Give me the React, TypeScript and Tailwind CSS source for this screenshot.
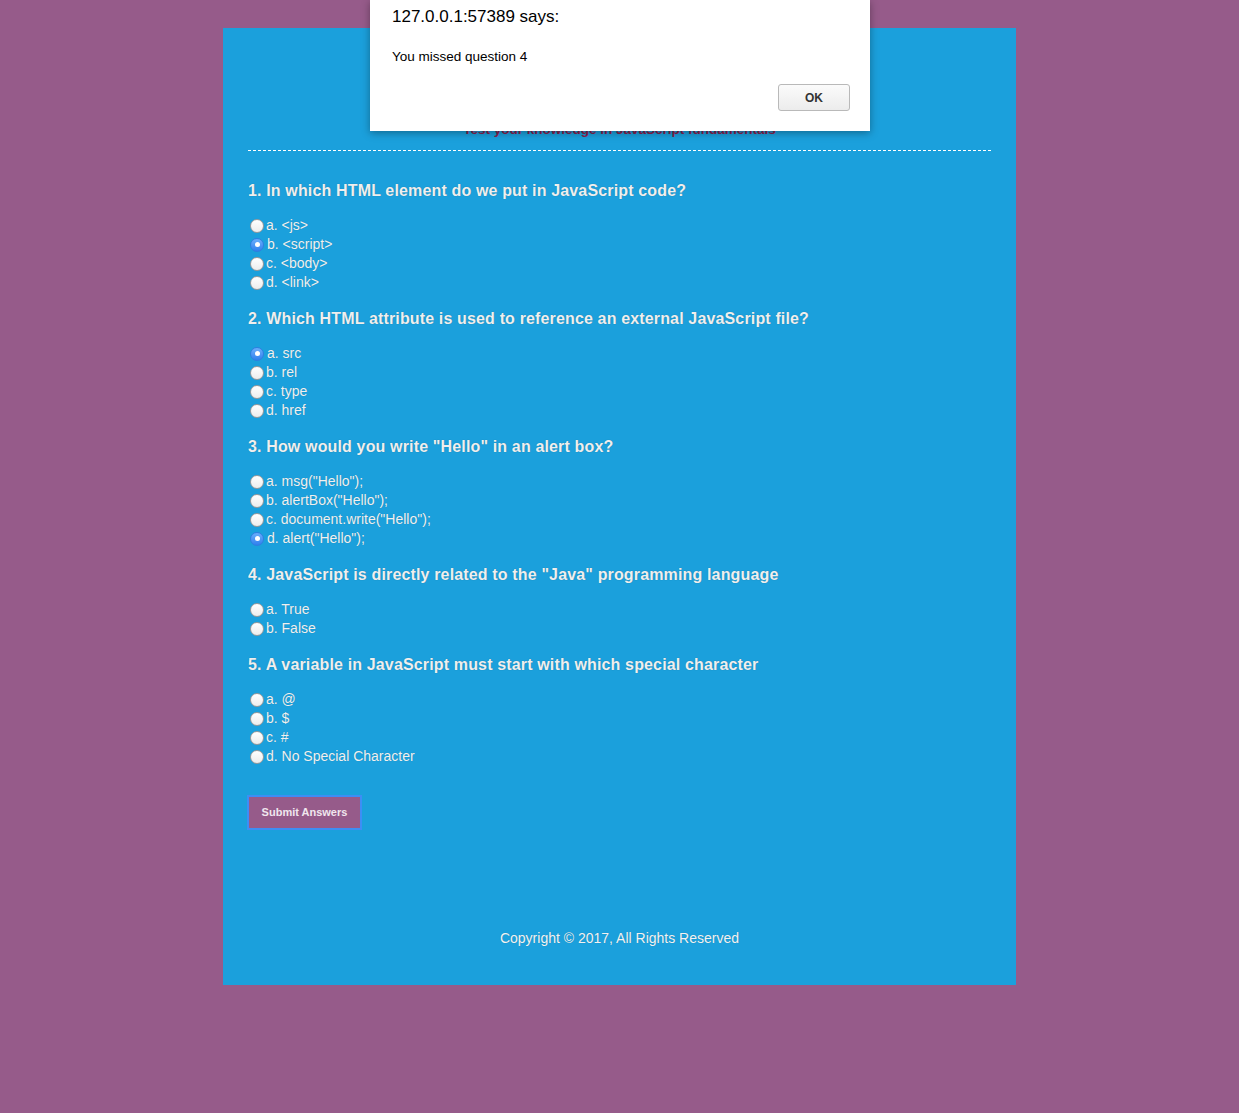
import React from "react";

type Question = {
  title: string;
  options: string[];
  checked: number | null;
};

const QUESTIONS: Question[] = [
  {
    title: "1. In which HTML element do we put in JavaScript code?",
    options: ["a. <js>", "b. <script>", "c. <body>", "d. <link>"],
    checked: 1,
  },
  {
    title: "2. Which HTML attribute is used to reference an external JavaScript file?",
    options: ["a. src", "b. rel", "c. type", "d. href"],
    checked: 0,
  },
  {
    title: '3. How would you write "Hello" in an alert box?',
    options: ['a. msg("Hello");', 'b. alertBox("Hello");', 'c. document.write("Hello");', 'd. alert("Hello");'],
    checked: 3,
  },
  {
    title: '4. JavaScript is directly related to the "Java" programming language',
    options: ["a. True", "b. False"],
    checked: null,
  },
  {
    title: "5. A variable in JavaScript must start with which special character",
    options: ["a. @", "b. $", "c. #", "d. No Special Character"],
    checked: null,
  },
];

function Radio({ on }: { on: boolean }) {
  if (on) {
    return (
      <span className="ml-[2px] mr-[3px] flex h-[14px] w-[14px] shrink-0 items-center justify-center rounded-full border border-[#2f7de0] bg-gradient-to-b from-[#6aaefb] to-[#2f80ee]">
        <span className="h-[5px] w-[5px] rounded-full bg-white" />
      </span>
    );
  }
  return (
    <span className="ml-[2px] mr-[2px] h-[14px] w-[14px] shrink-0 rounded-full border border-[#9a9a9a] bg-gradient-to-b from-white to-[#ededed]" />
  );
}

export default function App() {
  return (
    <div className="relative min-h-[1113px] bg-[#965b8a] pt-[28px] font-['Liberation_Sans',Arial,sans-serif]">
      {/* Quiz panel */}
      <div className="mx-auto h-[957px] w-[793px] bg-[#1ba0dc] px-[25px]">
        <div className="flex h-[122px] flex-col items-center justify-end pb-[12px]">
          <p className="text-[13.5px] leading-[16px] font-bold text-[#8a1f4e]">
            Test your knowledge in JavaScript fundamentals
          </p>
        </div>
        <div className="border-t border-dashed border-white" />

        <form className="mt-[30px]">
          {QUESTIONS.map((q, qi) => (
            <div key={qi} className="mb-[17px]">
              <h3 className="mb-4 text-[16px] leading-[19px] font-bold tracking-[0.15px] text-[#efefef] [text-shadow:0_0_1px_rgba(0,0,0,0.3)]">
                {q.title}
              </h3>
              {q.options.map((opt, oi) => (
                <label key={oi} className="flex h-[19px] items-center text-[14px] text-[#f0f0f0] [text-shadow:0_0_1px_rgba(0,0,0,0.2)]">
                  <Radio on={q.checked === oi} />
                  <span>{opt}</span>
                </label>
              ))}
            </div>
          ))}

          <button
            type="button"
            className="mt-[12px] -ml-[1px] h-[35px] w-[115px] border-2 border-[#3d8ef5] bg-[#965b8a] text-[11px] font-bold text-[#f0e6ee]"
          >
            Submit Answers
          </button>
        </form>

        <p className="mt-[98px] text-center text-[14px] text-[#f2f2f2] [text-shadow:0_0_1px_rgba(0,0,0,0.2)]">
          Copyright © 2017, All Rights Reserved
        </p>
      </div>

      {/* Browser alert dialog */}
      <div className="absolute left-[370px] top-0 h-[131px] w-[500px] bg-white shadow-[0_2px_8px_rgba(0,0,0,0.35)]">
        <p className="pl-[22px] pt-[7px] text-[17px] leading-[20px] text-black">127.0.0.1:57389 says:</p>
        <p className="mt-[22px] pl-[22px] text-[13.5px] leading-[16px] text-black">You missed question 4</p>
        <div className="mt-[19px] flex justify-end pr-[20px]">
          <button
            type="button"
            className="h-[27px] w-[72px] rounded-[3px] border border-[#b9b9b9] bg-gradient-to-b from-[#fbfbfb] to-[#ececec] text-[12px] font-bold text-[#333]"
          >
            OK
          </button>
        </div>
      </div>
    </div>
  );
}
